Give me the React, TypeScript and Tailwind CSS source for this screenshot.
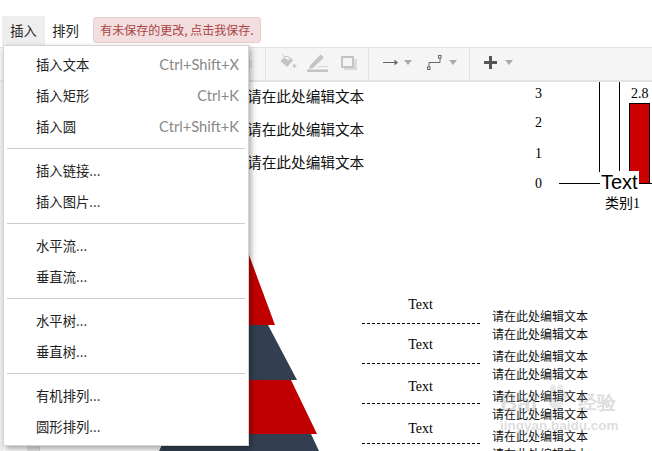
const cjk = "font-['Noto_Sans_CJK_SC','Liberation_Sans',sans-serif]";
const serif = "font-['Liberation_Serif','Noto_Sans_CJK_SC',serif]";

function Caret({ className }: { className: string }) {
  return <svg width="8" height="5" viewBox="0 0 8 5" className={className}><path d="M0 0h8L4 5z" fill="#aaa" /></svg>;
}

function Item({ label, shortcut }: { label: string; shortcut?: string }) {
  return (
    <div className="h-[31px] pl-[32px] pr-[9px] flex items-center justify-between text-[13.33px] text-[#222]">
      <span>{label}</span>
      {shortcut && <span className="font-['Lato',sans-serif] text-[#888] text-[14.67px]">{shortcut}</span>}
    </div>
  );
}

const Sep = () => <div className="mt-[5px] mb-[7px] mx-[3px] h-px bg-[#ccc]" />;

function Toolbar() {
  return (
    <div className="h-[35px] shrink-0 bg-[#f5f5f5] border-t border-t-[#e4e4e4] border-b-2 border-b-[#e2e2e2] flex items-center">
      <div className="w-[266px] h-full border-r border-r-[#e2e2e2] flex justify-end items-center pr-[13px]">
        <div className="w-[3px] h-[8px] border border-[#ddd]" />
      </div>
      <div className="w-[103px] h-full border-r border-r-[#e2e2e2] flex items-center pl-[14px] pb-[3px]">
        <svg width="17" height="15" viewBox="0 0 17 15" className="-mt-[3px]">
          <path d="M2.500 0.500 5 3.500" stroke="#c8c8c8" strokeWidth="1" fill="none" />
          <path d="M4.500 2.500c2-1 5 0 7 2l1.500 2-6 6.500-6.500-6z" fill="#c4c4c4" />
          <path d="M4 3.500c2-1 4-.5 6 1.500l-2 1z" fill="#f5f5f5" />
          <path d="M14.500 10v4M12.500 12h4" stroke="#c8c8c8" strokeWidth="1.400" />
        </svg>
        <svg width="21" height="18" viewBox="0 0 21 18" className="ml-[10px]">
          <path d="M3 11.500 12.500 1.500l1.200-1 3 3-1 1.200L6 14l-4 1z" fill="#c4c4c4" />
          <path d="M11 12.500h10" stroke="#d8d8d8" strokeWidth="1" />
          <rect x="0" y="15.500" width="21" height="2.500" fill="#c4c4c4" />
        </svg>
        <svg width="16" height="14" viewBox="0 0 16 14" className="ml-[13px]">
          <rect x="3" y="3" width="13" height="11" fill="#dadada" />
          <rect x="1" y="1" width="11" height="10" fill="#f5f5f5" stroke="#c4c4c4" strokeWidth="2" />
        </svg>
      </div>
      <div className="w-[101px] h-full border-r border-r-[#e2e2e2] flex items-center pl-[14px] pb-[3px]">
        <svg width="15" height="7" viewBox="0 0 15 7">
          <path d="M0 3.500h13" stroke="#666" strokeWidth="1" />
          <path d="M11.500 .5l3.500 3-3.500 3z" fill="#666" />
        </svg>
        <Caret className="ml-[6px]" />
        <svg width="15" height="15" viewBox="0 0 15 15" className="ml-[15px]">
          <path d="M2 12V7.500h11V3" fill="none" stroke="#666" />
          <rect x=".5" y="12" width="2.500" height="2.500" fill="#f5f5f5" stroke="#666" />
          <rect x="11.500" y=".5" width="2.500" height="2.500" fill="#f5f5f5" stroke="#666" />
        </svg>
        <Caret className="ml-[7px]" />
      </div>
      <div className="flex items-center pl-[14px] pb-[3px]">
        <svg width="13" height="13" viewBox="0 0 13 13"><path d="M5 0h3v5h5v3H8v5H5V8H0V5h5z" fill="#555" /></svg>
        <Caret className="ml-[8px]" />
      </div>
    </div>
  );
}

function Chart() {
  return (
    <div className="absolute left-[535px] top-0 w-[117px] h-[130px] text-black">
      <div className={`absolute left-0 top-[4px] flex flex-col gap-[14px] text-[14px] leading-4 ${serif}`}>
        <span>3</span>
        <span className="-mt-px">2</span>
        <span className="mt-px">1</span>
        <span>0</span>
      </div>
      <div className="absolute left-[64px] top-0 w-px h-[90px] bg-black" />
      <div className="absolute left-[84px] top-0 w-px h-[90px] bg-black" />
      <div className="absolute left-[24px] top-[101px] w-[93px] h-px bg-black" />
      <div className="absolute left-[94px] top-[21px] w-[21px] h-[81px] bg-[#cc0000] border border-black" />
      <div className={`absolute left-[96px] top-[4px] text-[14px] leading-4 ${serif}`}>2.8</div>
      <div className="absolute left-[65px] top-[89px] px-px bg-white text-[20px] leading-[23px] font-['Liberation_Sans',sans-serif]">Text</div>
      <div className="absolute left-[70px] top-[111px] text-[14px] leading-[18px]">类别<span className={serif}>1</span></div>
    </div>
  );
}

function Tree() {
  const pads = ["pb-[10px]", "pb-[10px]", "pb-[8px]", "pb-[6px]"];
  return (
    <>
      <svg width="200" height="223" viewBox="0 0 200 223" className="absolute left-[140px] top-[146px]">
        <polygon points="99,0 135,97 65,97" fill="#c00000" />
        <polygon points="70,97 128,97 157,152 40,152" fill="#333f50" />
        <polygon points="47,152 151,152 177,206 21,206" fill="#c00000" />
        <polygon points="27,206 171,206 179,223 19,223" fill="#333f50" />
      </svg>
      <div className="absolute left-[362px] top-[202px] w-[118px] flex flex-col">
        {pads.map((p) => (
          <div key={p} className={`h-[40px] flex flex-col items-center justify-end border-b border-dashed border-black ${p} text-[14px] leading-4 text-black ${serif}`}>
            <span className="pr-[1px]">Text</span>
          </div>
        ))}
      </div>
      <div className="absolute left-[492px] top-[227px] flex flex-col text-[12px] leading-[14px] text-[#111] whitespace-nowrap">
        {[0, 1, 2, 3].map((i) => (
          <div key={i} className="flex flex-col gap-[4px] pb-[8px]">
            <span>请在此处编辑文本</span>
            <span>请在此处编辑文本</span>
          </div>
        ))}
      </div>
    </>
  );
}

function Watermark() {
  return (
    <div className="absolute left-[500px] top-[306px] w-[116px] flex flex-col font-bold text-[#8a8a8a]/30 font-['Liberation_Sans',sans-serif] pointer-events-none">
      <div className="flex items-center justify-between text-[24px] leading-[30px]">
        <span>Bai</span>
        <svg width="26" height="28" viewBox="0 0 26 28" className="-mt-[10px] -ml-[6px]">
          <g fill="#8a8a8a" fillOpacity=".2">
            <ellipse cx="5" cy="11" rx="3" ry="4" />
            <ellipse cx="11" cy="5" rx="3" ry="4.500" />
            <ellipse cx="18" cy="5" rx="3" ry="4.500" />
            <ellipse cx="23" cy="11" rx="3" ry="4" />
            <ellipse cx="14" cy="19" rx="7" ry="6" />
          </g>
        </svg>
        <span className="text-[19px]">经验</span>
      </div>
      <div className="text-[13.5px] leading-4 whitespace-nowrap">jingyan.baidu.com</div>
    </div>
  );
}

function Canvas() {
  return (
    <div className="relative flex-1 overflow-hidden">
      <div className="absolute left-0 top-0 bottom-0 w-[3px] bg-[#f0f0f0]" />
      <div className="absolute left-[27px] bottom-0 w-[13px] h-[6px] bg-[#e8e8e8] border-r border-r-[#d8d8d8]" />
      <div className="absolute left-[247px] top-[4px] flex flex-col gap-[13px] text-[14.67px] leading-5 text-[#111] whitespace-nowrap">
        <span>请在此处编辑文本</span>
        <span>请在此处编辑文本</span>
        <span>请在此处编辑文本</span>
      </div>
      <Chart />
      <Tree />
      <Watermark />
    </div>
  );
}

export default function App() {
  return (
    <div className={`relative w-[652px] h-[451px] overflow-hidden bg-white flex flex-col ${cjk}`}>
      <div className="h-[47px] pt-[16px] pl-[2px] flex items-start shrink-0 text-[13.33px] text-[#222]">
        <div className="w-[43px] h-[29px] bg-[#eee] flex items-center justify-center">插入</div>
        <div className="w-[43px] h-[29px] ml-[-1px] flex items-center justify-center">排列</div>
        <div className="ml-[6px] mt-px w-[168px] h-[26px] bg-[#f2dede] border border-[#ebccd1] rounded-[3px] flex items-center justify-center text-[12px] text-[#a94442] whitespace-nowrap">有未保存的更改, 点击我保存.</div>
      </div>
      <Toolbar />
      <Canvas />

      <div className="absolute left-[3px] top-[45px] w-[246px] h-[401px] bg-white border border-[#d4d4d4] pt-[3.5px] shadow-[2px_3px_6px_rgba(0,0,0,0.35)]">
        <Item label="插入文本" shortcut="Ctrl+Shift+X" />
        <Item label="插入矩形" shortcut="Ctrl+K" />
        <Item label="插入圆" shortcut="Ctrl+Shift+K" />
        <Sep />
        <Item label="插入链接..." />
        <Item label="插入图片..." />
        <Sep />
        <Item label="水平流..." />
        <Item label="垂直流..." />
        <Sep />
        <Item label="水平树..." />
        <Item label="垂直树..." />
        <Sep />
        <Item label="有机排列..." />
        <Item label="圆形排列..." />
      </div>
    </div>
  );
}
